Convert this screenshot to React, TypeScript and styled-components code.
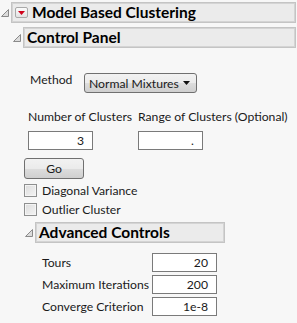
import { Fragment } from "react";
import styled, { createGlobalStyle } from "styled-components";

const GlobalStyle = createGlobalStyle`
  html, body {
    margin: 0;
    padding: 0;
    background: #f7f7f7;
  }
  body {
    font-family: Lato, "Open Sans", Arial, sans-serif;
    font-size: 12.2px;
    color: #1a1a1a;
  }
`;

const Page = styled.div`
  width: 297px;
  height: 323px;
  padding: 2px 1px 0 1px;
  box-sizing: border-box;
  overflow: hidden;
`;

const Node = styled.div<{ $indent?: number; $top?: number }>`
  display: flex;
  flex-direction: column;
  margin-left: ${(p) => p.$indent ?? 0}px;
  margin-top: ${(p) => p.$top ?? 0}px;
`;

const HeaderRow = styled.div`
  display: flex;
  align-items: center;
`;

const HeaderBox = styled.div<{ $width?: number; $height?: number }>`
  display: flex;
  align-items: center;
  gap: 4px;
  box-sizing: border-box;
  height: ${(p) => p.$height ?? 21}px;
  ${(p) => (p.$width ? `width: ${p.$width}px;` : "flex: 1;")}
  padding-left: 3px;
  background: #ebebeb;
  border: 1px solid #c4c4c4;
  box-shadow: inset 0 0 0 1px #d4d4d4;
`;

const Title = styled.span`
  font-weight: 700;
  font-size: 15.5px;
  color: #000;
  line-height: 1;
  white-space: nowrap;
`;

const Body = styled.div<{ $indent: number; $top?: number }>`
  display: flex;
  flex-direction: column;
  padding-left: ${(p) => p.$indent}px;
  margin-top: ${(p) => p.$top ?? 0}px;
`;

const RedButton = styled.span`
  display: flex;
  align-items: center;
  justify-content: center;
  width: 13px;
  height: 11px;
  box-sizing: border-box;
  border: 1px solid #a9a9a9;
  border-radius: 2px;
  background: linear-gradient(#fbfbfb, #e2e2e2);
`;

const Label = styled.span<{ $width?: number }>`
  display: inline-block;
  ${(p) => (p.$width ? `width: ${p.$width}px;` : "")}
  white-space: nowrap;
  line-height: 15px;
`;

const MethodRow = styled.div`
  display: flex;
  align-items: flex-start;
  margin-top: 25px;
  padding-left: 6px;
`;

const MethodLabel = styled(Label)`
  margin-top: -1px;
`;

const Dropdown = styled.div`
  display: flex;
  align-items: center;
  justify-content: space-between;
  box-sizing: border-box;
  width: 113px;
  height: 20px;
  padding: 0 6px 0 4px;
  border: 1px solid #707070;
  border-radius: 3px;
  white-space: nowrap;
  background: linear-gradient(#f2f2f2 0%, #ebebeb 50%, #dddddd 51%, #cfcfcf 100%);
`;

const ClusterGrid = styled.div`
  display: grid;
  grid-template-columns: 110px auto;
  row-gap: 7px;
  margin-top: 16px;
  padding-left: 4px;
`;

const NumberBox = styled.div<{ $width?: number }>`
  box-sizing: border-box;
  width: ${(p) => p.$width ?? 65}px;
  height: 19px;
  padding-right: 8px;
  border: 1px solid #7a7a7a;
  background: #fff;
  text-align: right;
  line-height: 17px;
`;

const GoButton = styled.div`
  box-sizing: border-box;
  width: 60px;
  height: 21px;
  margin-top: 8px;
  border: 1px solid #707070;
  border-radius: 3px;
  background: linear-gradient(#f2f2f2 0%, #ebebeb 50%, #dddddd 51%, #cfcfcf 100%);
  text-align: center;
  line-height: 19px;
`;

const CheckRow = styled.label<{ $top: number }>`
  display: flex;
  align-items: center;
  gap: 5px;
  height: 13px;
  margin-top: ${(p) => p.$top}px;
`;

const CheckBox = styled.span`
  box-sizing: border-box;
  width: 13px;
  height: 13px;
  border: 1px solid #8e8f8f;
  background: linear-gradient(135deg, #dcdcdc, #f4f4f4);
  box-shadow: inset 0 0 0 1px #f4f4f4;
`;

const FieldRows = styled.div`
  display: grid;
  grid-template-columns: 110px auto;
  row-gap: 3px;
  align-items: center;
  margin-top: 10px;
  padding-left: 17px;
`;

const Disclosure = () => (
  <svg width="10" height="8" viewBox="0 0 10 8" style={{ flex: "none" }}>
    <path d="M7.5 0.5 L7.5 7.5 L0.5 7.5 Z" fill="#dcdcdc" stroke="#8a8a8a" strokeWidth="1" />
  </svg>
);

const DownArrow = ({ color }: { color: string }) => (
  <svg width="7" height="4" viewBox="0 0 7 4">
    <path d="M0 0 L7 0 L3.5 4 Z" fill={color} />
  </svg>
);

const App = () => {
  const advanced = [
    { label: "Tours", value: "20" },
    { label: "Maximum Iterations", value: "200" },
    { label: "Converge Criterion", value: "1e-8" },
  ];

  return (
    <>
      <GlobalStyle />
      <Page>
        <Node>
          <HeaderRow>
            <Disclosure />
            <HeaderBox>
              <RedButton>
                <DownArrow color="#d0021b" />
              </RedButton>
              <Title>Model Based Clustering</Title>
            </HeaderBox>
          </HeaderRow>

          <Body $indent={12} $top={4}>
            <Node>
              <HeaderRow>
                <Disclosure />
                <HeaderBox>
                  <Title>Control Panel</Title>
                </HeaderBox>
              </HeaderRow>

              <Body $indent={11}>
                <MethodRow>
                  <MethodLabel $width={54}>Method</MethodLabel>
                  <Dropdown>
                    <span>Normal Mixtures</span>
                    <DownArrow color="#111" />
                  </Dropdown>
                </MethodRow>

                <ClusterGrid>
                  <Label>Number of Clusters</Label>
                  <Label>Range of Clusters (Optional)</Label>
                  <NumberBox>3</NumberBox>
                  <NumberBox>.</NumberBox>
                </ClusterGrid>

                <GoButton>Go</GoButton>

                <CheckRow $top={5}>
                  <CheckBox />
                  <span>Diagonal Variance</span>
                </CheckRow>
                <CheckRow $top={6}>
                  <CheckBox />
                  <span>Outlier Cluster</span>
                </CheckRow>

                <Node $indent={1} $top={6}>
                  <HeaderRow>
                    <Disclosure />
                    <HeaderBox $width={190} $height={21}>
                      <Title>Advanced Controls</Title>
                    </HeaderBox>
                  </HeaderRow>
                  <FieldRows>
                    {advanced.map((f) => (
                      <Fragment key={f.label}>
                        <Label>{f.label}</Label>
                        <NumberBox>{f.value}</NumberBox>
                      </Fragment>
                    ))}
                  </FieldRows>
                </Node>
              </Body>
            </Node>
          </Body>
        </Node>
      </Page>
    </>
  );
};

export default App;
